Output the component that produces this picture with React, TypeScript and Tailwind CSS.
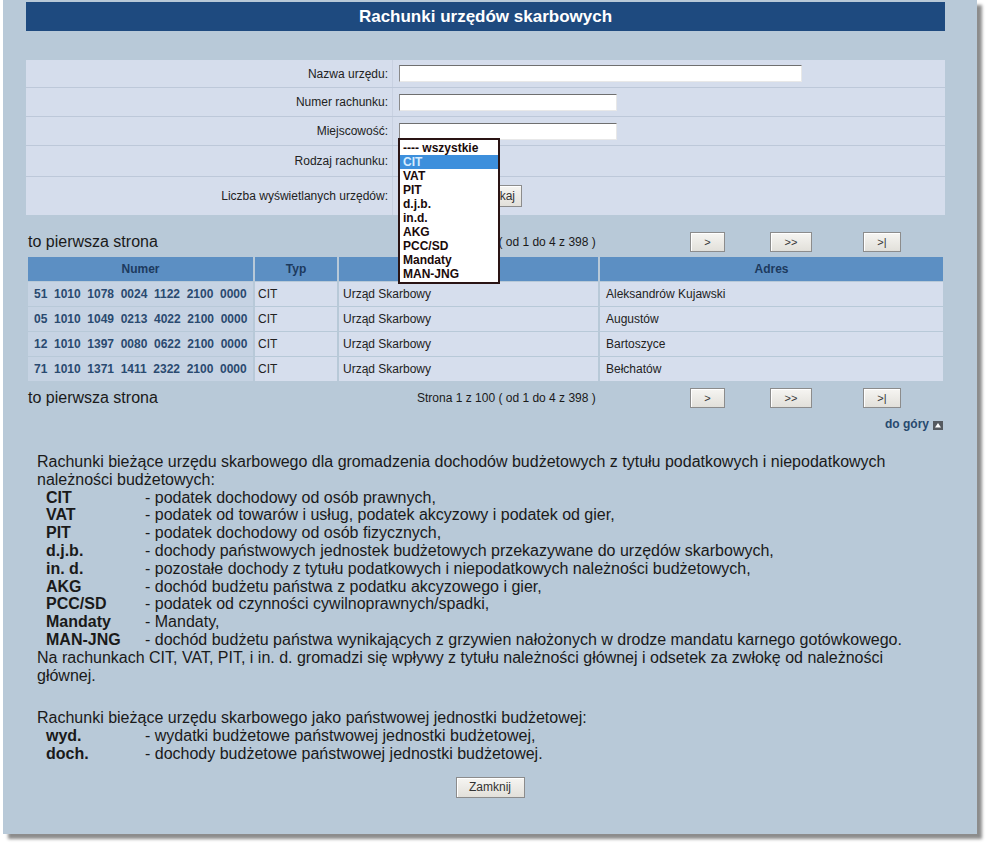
const FORM_ROWS: { label: string; h: string; field: "wide" | "narrow" | "select" | "count" }[] = [
  { label: "Nazwa urzędu:", h: "h-[28px]", field: "wide" },
  { label: "Numer rachunku:", h: "h-[29px]", field: "narrow" },
  { label: "Miejscowość:", h: "h-[29px]", field: "narrow" },
  { label: "Rodzaj rachunku:", h: "h-[31px]", field: "select" },
  { label: "Liczba wyświetlanych urzędów:", h: "h-[38px]", field: "count" },
];

const OPTIONS = ["---- wszystkie", "CIT", "VAT", "PIT", "d.j.b.", "in.d.", "AKG", "PCC/SD", "Mandaty", "MAN-JNG"];

const ROWS = [
  { nr: "51 1010 1078 0024 1122 2100 0000", adres: "Aleksandrów Kujawski" },
  { nr: "05 1010 1049 0213 4022 2100 0000", adres: "Augustów" },
  { nr: "12 1010 1397 0080 0622 2100 0000", adres: "Bartoszyce" },
  { nr: "71 1010 1371 1411 2322 2100 0000", adres: "Bełchatów" },
];

const CODES = [
  ["CIT", "- podatek dochodowy od osób prawnych,"],
  ["VAT", "- podatek od towarów i usług, podatek akcyzowy i podatek od gier,"],
  ["PIT", "- podatek dochodowy od osób fizycznych,"],
  ["d.j.b.", "- dochody państwowych jednostek budżetowych przekazywane do urzędów skarbowych,"],
  ["in. d.", "- pozostałe dochody z tytułu podatkowych i niepodatkowych należności budżetowych,"],
  ["AKG", "- dochód budżetu państwa z podatku akcyzowego i gier,"],
  ["PCC/SD", "- podatek od czynności cywilnoprawnych/spadki,"],
  ["Mandaty", "- Mandaty,"],
  ["MAN-JNG", "- dochód budżetu państwa wynikających z grzywien nałożonych w drodze mandatu karnego gotówkowego."],
];

const btn =
  "flex items-center justify-center border border-[#8c8c8c] bg-gradient-to-b from-[#f6f5f2] to-[#e2e0da] text-[11px] text-[#333] shadow-[inset_1px_1px_0_#fff]";

function Input({ w }: { w: string }) {
  return (
    <div className={`${w} h-[17px] border border-t-[#6f6f6f] border-l-[#8a8a8a] border-r-[#e8e8e8] border-b-[#e8e8e8] bg-white`} />
  );
}

function Pager({ text }: { text: string }) {
  return (
    <div className="flex h-[22px] items-center">
      <div className="w-[391px] pl-[2px] text-[16px] text-[#1a1a1a]">to pierwsza strona</div>
      <div className="w-[273px] text-[12px] text-[#1a1a1a]">{text}</div>
      <div className={`${btn} h-[20px] w-[35px]`}>&gt;</div>
      <div className={`${btn} ml-[45px] h-[20px] w-[42px]`}>&gt;&gt;</div>
      <div className={`${btn} ml-[51px] h-[20px] w-[38px]`}>&gt;|</div>
    </div>
  );
}

export default function App() {
  return (
    <div className="min-h-[844px] w-full bg-white font-['Liberation_Sans',Arial,sans-serif]">
      <div className="ml-[3px] w-[974px] bg-[#b8c9d8] pb-[36px] pt-[2px] shadow-[5px_5px_3px_rgba(0,0,0,0.45)]">
        <div className="ml-[23px] w-[919px]">
          <div className="flex h-[29px] items-center justify-center bg-[#1e4a7f] text-[17px] font-bold text-white">
            Rachunki urzędów skarbowych
          </div>

          <div className="relative mt-[29px] bg-[#d5ddec]">
            {FORM_ROWS.map((r, i) => (
              <div
                key={r.label}
                className={`grid grid-cols-[366px_1fr] ${r.h} ${i < FORM_ROWS.length - 1 ? "border-b border-[#bdc8d9]" : ""}`}
              >
                <div className="flex items-center justify-end pr-[4px] text-[12px] text-[#222]">{r.label}</div>
                <div className="flex items-center border-l border-[#c8d1e1] pl-[6px]">
                  {r.field === "wide" && <Input w="w-[403px]" />}
                  {r.field === "narrow" && <Input w="w-[218px]" />}
                  {r.field === "select" && <Input w="w-[100px]" />}
                  {r.field === "count" && (
                    <>
                      <Input w="w-[66px]" />
                      <div className={`${btn} ml-[7px] h-[22px] w-[50px] text-[12px] text-[#222]`}>Szukaj</div>
                    </>
                  )}
                </div>
              </div>
            ))}

            <div className="absolute left-[372px] top-[78px] w-[102px] border-2 border-[#2a1414] bg-white py-[1px]">
              {OPTIONS.map((o, i) => (
                <div
                  key={o}
                  className={`h-[14px] pl-[3px] text-[12px] font-bold leading-[14px] ${
                    i === 1 ? "bg-[#3d8fdc] text-[#d6ecff]" : "text-[#1a0a0a]"
                  }`}
                >
                  {o}
                </div>
              ))}
            </div>
          </div>

          <div className="mt-[16px]">
            <Pager text="Strona 1 z 100 ( od 1 do 4 z 398 )" />
          </div>

          <table className="mt-[3px] w-full table-fixed border-separate border-spacing-x-[2px] border-spacing-y-[1px] text-[12px]">
            <colgroup>
              <col className="w-[225px]" />
              <col className="w-[82px]" />
              <col className="w-[259px]" />
              <col />
            </colgroup>
            <thead>
              <tr className="h-[24px] bg-[#5c8fc3] font-bold text-[#1c3a5e]">
                <th>Numer</th>
                <th>Typ</th>
                <th>Nazwa</th>
                <th>Adres</th>
              </tr>
            </thead>
            <tbody>
              {ROWS.map((r) => (
                <tr key={r.nr} className="h-[24px] text-[#222]">
                  <td className="bg-[#c6d3e3] pl-[6px] font-bold text-[#2a4a70] [word-spacing:3.3px]">{r.nr}</td>
                  <td className="bg-[#d6deed] pl-[3px]">CIT</td>
                  <td className="bg-[#d6deed] pl-[4px]">Urząd Skarbowy</td>
                  <td className="bg-[#d6deed] pl-[6px]">{r.adres}</td>
                </tr>
              ))}
            </tbody>
          </table>

          <div className="mt-[5px]">
            <Pager text="Strona 1 z 100 ( od 1 do 4 z 398 )" />
          </div>

          <div className="mt-[8px] flex h-[14px] items-center justify-end gap-[4px] pr-[2px]">
            <span className="text-[12px] font-bold text-[#27496e]">do góry</span>
            <svg width="10" height="9" viewBox="0 0 10 9" className="mt-[3px]">
              <rect width="10" height="9" fill="#555a60" />
              <path d="M5 2 L8 6.5 L2 6.5 Z" fill="#fff" />
            </svg>
          </div>
        </div>

        <div className="ml-[34px] mt-[22px] w-[885px] text-[16px] leading-[17.8px] text-[#1a1a1a]">
          <p>
            Rachunki bieżące urzędu skarbowego dla gromadzenia dochodów budżetowych z tytułu podatkowych i niepodatkowych
            należności budżetowych:
          </p>
          {CODES.map(([c, d]) => (
            <div key={c} className="flex">
              <span className="w-[108px] shrink-0 pl-[9px] font-bold">{c}</span>
              <span>{d}</span>
            </div>
          ))}
          <p>
            Na rachunkach CIT, VAT, PIT, i in. d. gromadzi się wpływy z tytułu należności głównej i odsetek za zwłokę od
            należności głównej.
          </p>
          <p className="mt-[25px]">Rachunki bieżące urzędu skarbowego jako państwowej jednostki budżetowej:</p>
          <div className="flex">
            <span className="w-[108px] shrink-0 pl-[9px] font-bold">wyd.</span>
            <span>- wydatki budżetowe państwowej jednostki budżetowej,</span>
          </div>
          <div className="flex">
            <span className="w-[108px] shrink-0 pl-[9px] font-bold">doch.</span>
            <span>- dochody budżetowe państwowej jednostki budżetowej.</span>
          </div>
        </div>

        <div className="mt-[14px] flex justify-center">
          <div className={`${btn} h-[21px] w-[69px] text-[12px] text-[#222]`}>Zamknij</div>
        </div>
      </div>
    </div>
  );
}
